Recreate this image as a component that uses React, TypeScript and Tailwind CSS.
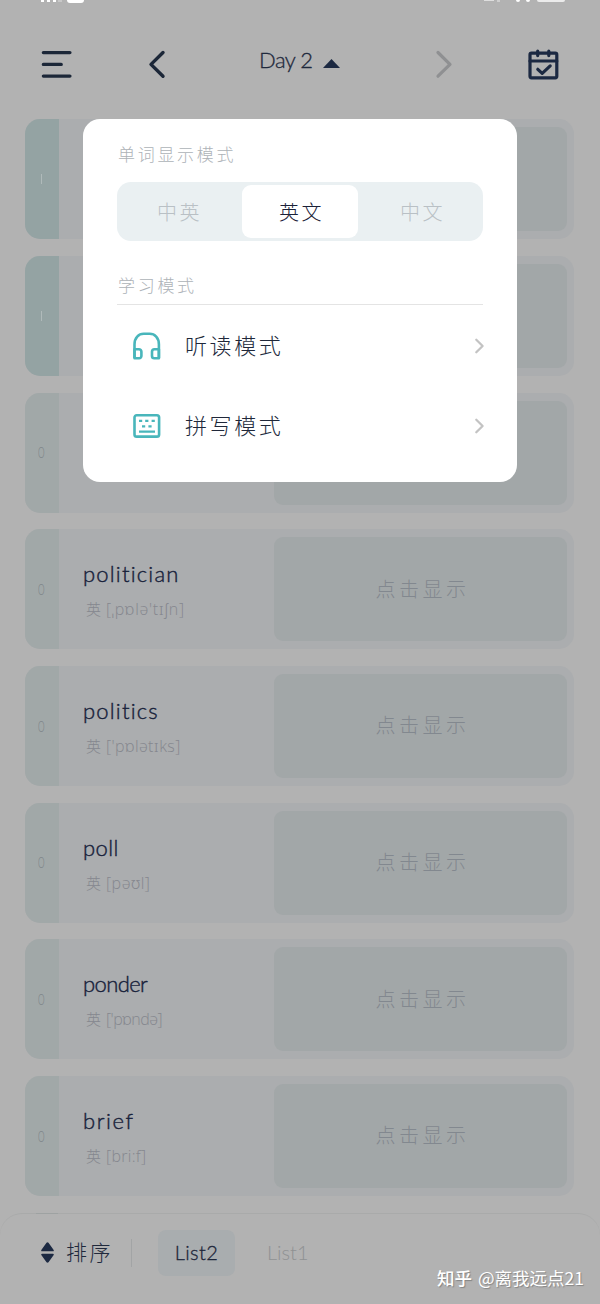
import { clsx } from 'clsx';

interface WordEntry {
  word: string;
  phonetic: string;
  count: number;
  wordClass?: string;
  phoneticClass?: string;
}

const WORDS: WordEntry[] = [
  { word: '', phonetic: '', count: 1 },
  { word: '', phonetic: '', count: 1 },
  { word: '', phonetic: '', count: 0 },
  { word: 'politician', phonetic: '[ˌpɒlə\'tɪʃn]', count: 0, wordClass: 'tracking-[1.2px]', phoneticClass: 'tracking-[0.7px]' },
  { word: 'politics', phonetic: '[\'pɒlətɪks]', count: 0, wordClass: 'tracking-[1.2px]', phoneticClass: 'tracking-[0.4px]' },
  { word: 'poll', phonetic: '[pəʊl]', count: 0, wordClass: 'tracking-[0.4px]', phoneticClass: 'tracking-[0.5px]' },
  { word: 'ponder', phonetic: '[\'pɒndə]', count: 0, wordClass: 'tracking-[-0.6px]', phoneticClass: 'tracking-[-0.5px]' },
  { word: 'brief', phonetic: '[bri:f]', count: 0, wordClass: 'tracking-[1.6px]', phoneticClass: 'tracking-[0.3px]' },
];

const MODES = [
  { label: '中英', className: 'w-[125px] text-[#b9c0c5]' },
  { label: '英文', className: 'w-[116px] rounded-[9px] bg-white pl-[3px] text-[#1b2138]' },
  { label: '中文', className: 'w-[125px] pl-1 text-[#b9c0c5]' },
];

function StatusBar() {
  return (
    <div className="flex h-[3px] items-start pl-[41px] pr-[35px]">
      <span className="h-0.5 w-[3px] bg-white" />
      <span className="ml-[3px] h-0.5 w-[3px] bg-white" />
      <span className="ml-[3px] h-0.5 w-[3px] bg-white" />
      <span className="ml-0.5 h-0.5 w-1 bg-[#c8c8c8]" />
      <span className="ml-[5px] h-[3px] w-[17px] rounded-b-[3px] bg-white" />
      <span className="ml-auto h-px w-2.5 bg-[#dedede]" />
      <span className="ml-[3px] h-0.5 w-[3px] bg-[#cfcfcf]" />
      <span className="ml-4 h-0.5 w-1 rounded-b bg-white" />
      <span className="ml-1.5 h-0.5 w-1 rounded-b bg-white" />
      <span className="ml-[7px] h-0.5 w-7 rounded-b-[3px] bg-[#ebebeb]" />
    </div>
  );
}

function Header() {
  return (
    <header className="flex h-[116.3px] shrink-0 items-start pl-10">
      <svg className="mt-[46px] h-8 w-8" viewBox="0 0 32 32" fill="none" stroke="#1c2738" strokeWidth="3.4" strokeLinecap="round">
        <path d="M3.4 3.6h26.5M3.4 15.4h17.8M3.4 27.1h26.5" />
      </svg>
      <svg className="ml-[74px] mt-[45px] h-8 w-5" viewBox="0 0 20 32" fill="none" stroke="#1c2738" strokeWidth="3.4" strokeLinecap="round" strokeLinejoin="round">
        <path d="M17 4.5 5 16.4 17 28.2" />
      </svg>
      <div className="ml-[93px] mt-[41px] flex w-[81px] items-center justify-between">
        <span className="whitespace-nowrap font-[Lato,sans-serif] text-[22px] font-light leading-8 tracking-[-0.5px] text-[#1f293c] [-webkit-text-stroke:0.3px_#1f293c]">Day 2</span>
        <svg className="mt-1.5 h-[9px] w-[17px] shrink-0" viewBox="0 0 17 9" fill="#1c2942">
          <path d="M8.5 0 17 8.9H0z" />
        </svg>
      </div>
      <svg className="ml-[92px] mt-[45px] h-8 w-6" viewBox="0 0 24 32" fill="none" stroke="#8f9092" strokeWidth="3.2" strokeLinecap="round" strokeLinejoin="round">
        <path d="M6 4.5 18 16.4 6 28.2" />
      </svg>
      <svg className="ml-[71px] mt-[45px] h-8 w-8 shrink-0" viewBox="0 0 32 32" fill="none" stroke="#1c2942" strokeWidth="3.2" strokeLinecap="round" strokeLinejoin="round">
        <rect x="3" y="5.2" width="26.8" height="24.6" rx="1.5" />
        <path d="M3 13h26.8M10.7 3.2v4.4M21.8 3.2v4.4M10.8 21.3l4.4 4.1 8-7.5" />
      </svg>
    </header>
  );
}

function WordCard({ entry }: { entry: WordEntry }) {
  const learned = entry.count > 0;
  return (
    <div className="flex h-[120px] shrink-0 overflow-hidden rounded-[15px] bg-[#abadaf]">
      <div
        className={clsx(
          'flex w-[33.5px] items-center justify-center font-[Lato,sans-serif] text-[15px] font-light',
          learned ? 'bg-[#94a3a3] text-[#b8c2c2]' : 'bg-[#a1a8a8] text-[#7f868a]',
        )}
      >
        {learned ? <span className="h-2.5 w-px bg-[#b0baba]" aria-label="1" /> : <span className="scale-x-75">0</span>}
      </div>
      <div className="w-[215.5px] pl-[24.5px] pt-[29px]">
        <div
          className={clsx(
            'whitespace-nowrap font-[Lato,sans-serif] text-[22px] font-light leading-8 text-[#17213a] [-webkit-text-stroke:0.4px_#17213a]',
            entry.wordClass,
          )}
        >
          {entry.word}
        </div>
        {entry.phonetic && (
          <div className="mt-[7px] flex items-center whitespace-nowrap pl-[3px] leading-6 text-[#85878e]">
            <span className="text-[15px] font-light">英</span>
            <span className={clsx("ml-[5px] font-['Open_Sans','Noto_Sans',sans-serif] text-base font-light", entry.phoneticClass)}>
              {entry.phonetic}
            </span>
          </div>
        )}
      </div>
      <div className="mt-2 flex h-[104px] w-[293px] items-center justify-center rounded-[9px] bg-[#a2a7a8] pb-px pl-1 text-xl font-light tracking-[3.5px] text-[#82888f]">
        点击显示
      </div>
    </div>
  );
}

function Chevron() {
  return (
    <svg className="-mr-0.5 ml-auto h-4 w-3" viewBox="0 0 12 16" fill="none" stroke="#c3c3c3" strokeWidth="2.3" strokeLinecap="round" strokeLinejoin="round">
      <path d="M3.3 1.8 9.6 8l-6.3 6.2" />
    </svg>
  );
}

function HeadphonesIcon() {
  return (
    <svg className="h-7 w-7" viewBox="0 0 28 28" fill="none" stroke="#49b6bb" strokeWidth="2.6" strokeLinejoin="round">
      <path d="M1.5 26V12.5C1.5 5.5 5.7 1.8 10.7 1.8h6c5 0 9.2 3.7 9.2 10.7V26" />
      <path d="M1.5 17.2h4.4a2.5 2.5 0 0 1 2.5 2.5v4.4a2.2 2.2 0 0 1-2.2 2.2H1.5zM25.9 17.2h-4.4a2.5 2.5 0 0 0-2.5 2.5v4.4a2.2 2.2 0 0 0 2.2 2.2h4.7z" />
    </svg>
  );
}

function KeyboardIcon() {
  return (
    <svg className="h-7 w-7" viewBox="0 0 28 28" fill="none" stroke="#49b6bb" strokeWidth="2.6">
      <rect x="1.5" y="3.2" width="24.6" height="21.4" rx="2.2" />
      <path strokeWidth="2.3" d="M6 8.8h3.2M12.2 8.8h3.2M18.6 8.8h3.2M9 14.3h3.2M15.4 14.3h3.2M6 19.7h16" />
    </svg>
  );
}

function ModePanel() {
  return (
    <div className="absolute left-[83px] top-[119px] h-[363px] w-[434px] rounded-[17px] bg-white px-[34px] pt-[21px]">
      <div className="pl-px text-[17px] font-light leading-7 tracking-[2.7px] text-[#adb2b7]">单词显示模式</div>
      <div className="mt-3.5 flex h-[59px] rounded-[14px] bg-[#eaf0f2] py-[3px]">
        {MODES.map(mode => (
          <button
            key={mode.label}
            className={clsx('flex items-center justify-center text-xl font-light tracking-[2.5px]', mode.className)}
          >
            {mode.label}
          </button>
        ))}
      </div>
      <div className="mt-[30px] border-b border-[#e4e4e4] pb-[5px] pl-px text-[17px] font-light leading-7 tracking-[2.7px] text-[#adb2b7]">
        学习模式
      </div>
      <div className="flex h-20 items-center pl-4 pt-px">
        <HeadphonesIcon />
        <span className="-mt-0.5 ml-6 text-[22px] font-light tracking-[2.6px] text-[#20283a]">听读模式</span>
        <Chevron />
      </div>
      <div className="flex h-20 items-center pl-4 pt-px">
        <KeyboardIcon />
        <span className="-mt-0.5 ml-6 text-[22px] font-light tracking-[2.6px] text-[#20283a]">拼写模式</span>
        <Chevron />
      </div>
    </div>
  );
}

function BottomBar() {
  return (
    <footer className="absolute inset-x-0 bottom-0 flex h-[91px] items-start rounded-t-[22px] border-t border-[#a9aaaa] bg-[#b2b2b2] pl-[41px] pt-4">
      <span className="absolute -top-px left-9 h-px w-[22px] bg-[#9ea2a2]" />
      <div className="flex h-[46px] items-center">
        <svg className="-mt-0.5 h-[21px] w-[13px]" viewBox="0 0 13 21" fill="#1c2942">
          <path d="M5.5.8q1-.9 2 0l5.2 7.3q.4 1.2-.8 1.2H1.1q-1.2 0-.8-1.2zM.3 12.9q-.4-1.2.8-1.2h10.8q1.2 0 .8 1.2l-5.2 7.3q-1 .9-2 0z" />
        </svg>
        <span className="-mt-0.5 ml-3 text-[21px] font-light tracking-[2.5px] text-[#20293c]">排序</span>
        <span className="ml-[18px] h-7 w-px bg-[#a2a4a5]" />
      </div>
      <button className="ml-[26px] flex h-[46px] w-[77px] items-center justify-center rounded-lg bg-[#a9adaf] pb-0.5 font-[Lato,sans-serif] text-xl font-light tracking-[0.4px] text-[#1c2539] [-webkit-text-stroke:0.3px_#1c2539]">
        List2
      </button>
      <button className="ml-8 flex h-[46px] items-center pb-0.5 font-[Lato,sans-serif] text-xl font-light text-[#8f9193]">List1</button>
      <div className="absolute left-[437px] top-[50px] flex gap-1.5 whitespace-nowrap text-[17.5px] leading-7 text-white [text-shadow:1px_1px_1px_#6669]">
        <span className="font-medium">知乎</span>
        <span>@离我远点21</span>
      </div>
    </footer>
  );
}

export default function App() {
  return (
    <div className="relative flex h-[1304px] w-[600px] flex-col overflow-hidden bg-[#b2b2b2] font-['Noto_Sans_CJK_SC',sans-serif]">
      <StatusBar />
      <Header />
      <main className="flex flex-col gap-[16.65px] pl-[25px] pr-[26px]">
        {WORDS.map((entry, i) => (
          <WordCard key={i} entry={entry} />
        ))}
      </main>
      <BottomBar />
      <ModePanel />
    </div>
  );
}
